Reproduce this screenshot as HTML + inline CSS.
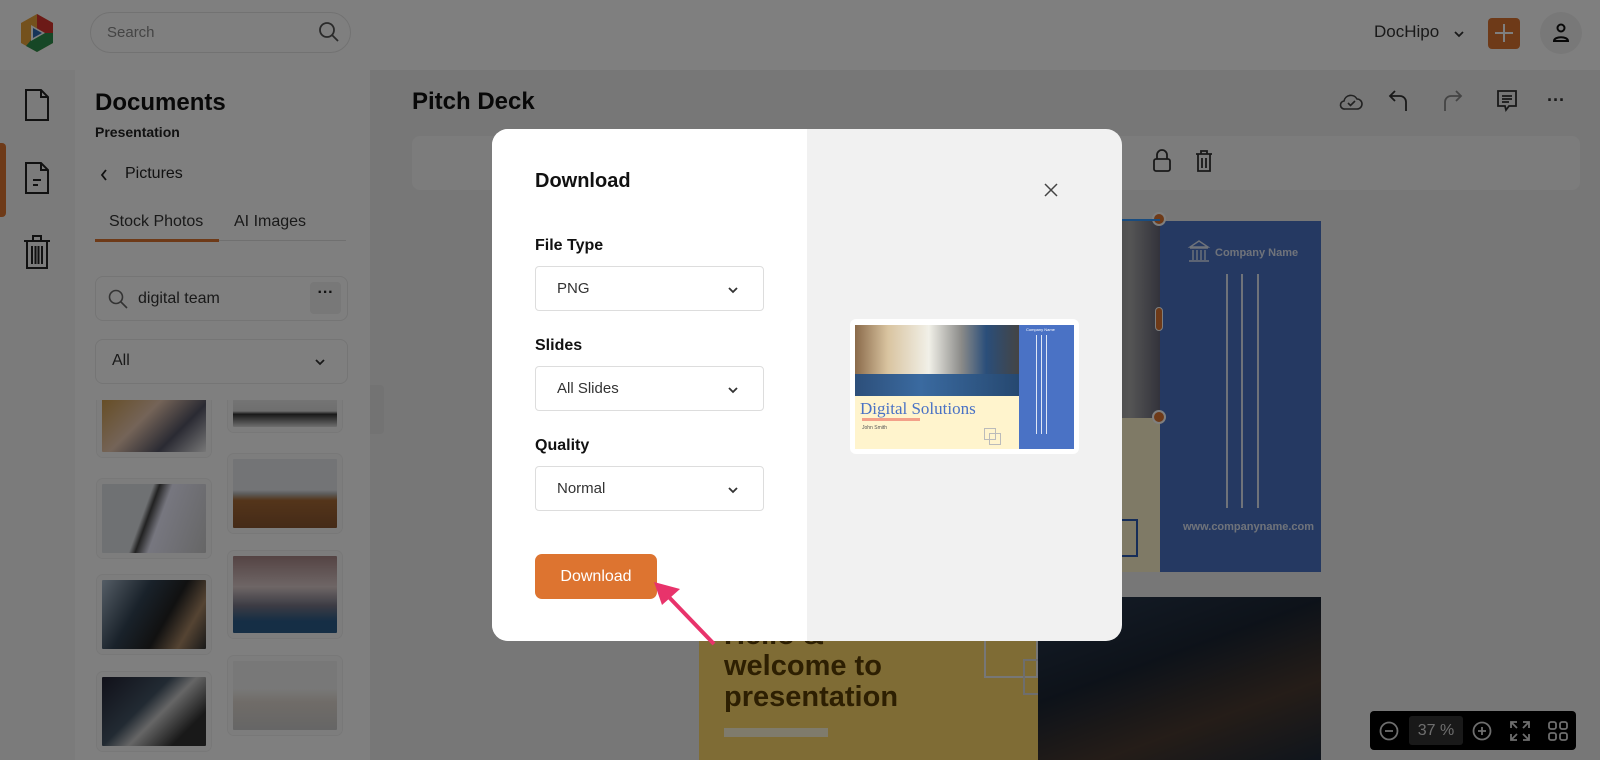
<!DOCTYPE html>
<html><head><meta charset="utf-8"><style>
*{box-sizing:border-box;margin:0;padding:0}
body{width:1600px;height:760px;overflow:hidden;position:relative;font-family:"Liberation Sans",sans-serif;background:#eeeeee;color:#222}
.abs{position:absolute}
.top{left:0;top:0;width:1600px;height:70px;background:#fff}
.rail{left:0;top:70px;width:75px;height:690px;background:#f6f6f6}
.panel{left:75px;top:70px;width:295px;height:690px;background:#fff}
.ws{left:370px;top:70px;width:1230px;height:690px;background:#eee}
.inp{border:1px solid #eaeaea;border-radius:8px;background:#fff}
.th{position:absolute;border-radius:6px;border:5px solid #fafafa;box-shadow:0 0 0 1px #f0f0f0}
.ov{left:0;top:0;width:1600px;height:760px;background:rgba(0,0,0,.5)}
.modal{left:492px;top:129px;width:630px;height:512px;border-radius:16px;overflow:hidden;background:#f1f1f1}
.ml{position:absolute;left:0;top:0;width:315px;height:512px;background:#fff}
.lbl{position:absolute;left:43px;font-weight:bold;font-size:16px;color:#111}
.sel{position:absolute;left:43px;width:229px;height:45px;border:1px solid #ddd;border-radius:4px;font-size:15px;color:#333;padding:13px 0 0 21px}
.sel svg{position:absolute;right:24px;top:18px}
</style></head><body>
<div class="abs top"></div>
<!-- logo -->
<svg class="abs" style="left:18px;top:13px" width="38" height="40" viewBox="0 0 38 40"><path d="M19 1 L35 10 L35 30 L19 39 L3 30 L3 10Z" fill="#e8a33a"/><path d="M19 1 L35 10 L35 20 L19 20Z" fill="#d8352f"/><path d="M35 20 L35 30 L19 39 L8 33 L19 20Z" fill="#2c8f4c"/><path d="M13 12 L27 20 L13 28Z" fill="#fff"/><path d="M15 15 L24 20 L15 25Z" fill="#2d69b3"/></svg>
<div class="abs" style="left:90px;top:12px;width:261px;height:41px;border:1px solid #e4e4e4;border-radius:21px;background:#fff"></div>
<div class="abs" style="left:107px;top:24px;font-size:15px;color:#888">Search</div>
<svg class="abs" style="left:318px;top:21px" width="22" height="22" viewBox="0 0 22 22" fill="none" stroke="#555" stroke-width="1.8"><circle cx="9" cy="9" r="7"/><path d="M14 14l6 6"/></svg>
<div class="abs" style="left:1374px;top:22px;font-size:17px;color:#333">DocHipo</div>
<svg class="abs" style="left:1453px;top:29px" width="12" height="10" viewBox="0 0 12 10" fill="none" stroke="#333" stroke-width="1.8"><path d="M2 3l4 4 4-4"/></svg>
<div class="abs" style="left:1488px;top:18px;width:32px;height:31px;background:#dd7430;border-radius:4px"></div>
<svg class="abs" style="left:1494px;top:23px" width="20" height="20" viewBox="0 0 20 20" stroke="#fff" stroke-width="2"><path d="M10 1v18M1 10h18"/></svg>
<div class="abs" style="left:1540px;top:12px;width:42px;height:42px;border-radius:50%;background:#f0f0f0"></div>
<svg class="abs" style="left:1551px;top:22px" width="20" height="22" viewBox="0 0 20 22" fill="none" stroke="#111" stroke-width="2"><circle cx="10" cy="6" r="3.5"/><path d="M3 19c0-5 14-5 14 0z"/></svg>

<div class="abs rail"></div>
<div class="abs" style="left:0;top:143px;width:6px;height:74px;background:#dd7430;border-radius:0 4px 4px 0"></div>
<svg class="abs" style="left:23px;top:88px" width="28" height="34" viewBox="0 0 28 34" fill="none" stroke="#222" stroke-width="2"><path d="M3 2h15l7 7v23H3z M18 2v7h7"/></svg>
<svg class="abs" style="left:23px;top:161px" width="28" height="34" viewBox="0 0 28 34" fill="none" stroke="#222" stroke-width="2"><path d="M3 2h15l7 7v23H3z M18 2v7h7 M10 19h8 M10 24h5"/></svg>
<svg class="abs" style="left:22px;top:234px" width="30" height="36" viewBox="0 0 30 36" fill="none" stroke="#222" stroke-width="2"><path d="M2 7h26 M11 7V2h8v5 M5 7v27h20V7 M10 12v18 M13.5 12v18 M16.5 12v18 M20 12v18"/></svg>

<div class="abs panel"></div>
<div class="abs" style="left:95px;top:89px;font-size:24px;font-weight:bold;color:#111">Documents</div>
<div class="abs" style="left:95px;top:124px;font-size:14px;font-weight:bold;color:#222">Presentation</div>
<svg class="abs" style="left:100px;top:169px" width="8" height="12" viewBox="0 0 8 12" fill="none" stroke="#222" stroke-width="1.8"><path d="M6 1L2 6l4 5"/></svg>
<div class="abs" style="left:125px;top:165px;font-size:16px;color:#222">Pictures</div>
<div class="abs" style="left:109px;top:213px;font-size:16px;color:#333">Stock Photos</div>
<div class="abs" style="left:234px;top:213px;font-size:16px;color:#333">AI Images</div>
<div class="abs" style="left:95px;top:240px;width:251px;height:1px;background:#e0e0e0"></div>
<div class="abs" style="left:95px;top:239px;width:124px;height:3px;background:#dd7430"></div>
<div class="abs inp" style="left:95px;top:276px;width:253px;height:45px"></div>
<svg class="abs" style="left:108px;top:289px" width="20" height="20" viewBox="0 0 20 20" fill="none" stroke="#666" stroke-width="1.6"><circle cx="8" cy="8" r="6.5"/><path d="M13 13l6 6"/></svg>
<div class="abs" style="left:138px;top:290px;font-size:16px;color:#333">digital team</div>
<div class="abs" style="left:310px;top:282px;width:31px;height:32px;background:#f0f0f0;border-radius:4px;font-size:16px;text-align:center;line-height:22px;font-weight:bold">···</div>
<div class="abs inp" style="left:95px;top:339px;width:253px;height:45px"></div>
<div class="abs" style="left:112px;top:352px;font-size:16px;color:#333">All</div>
<svg class="abs" style="left:314px;top:357px" width="12" height="10" viewBox="0 0 12 10" fill="none" stroke="#333" stroke-width="1.8"><path d="M2 3l4 4 4-4"/></svg>
<div style="position:absolute;left:95px;top:400px;width:260px;height:360px;overflow:hidden">
<div class="th" style="left:2px;top:-10px;width:114px;height:67px;background:linear-gradient(135deg,#c94 0%,#e9c8b0 40%,#556 70%,#eee)"></div>
<div class="th" style="left:133px;top:-10px;width:114px;height:42px;background:linear-gradient(#eee,#ddd 50%,#333 60%,#ddd)"></div>
<div class="th" style="left:2px;top:79px;width:114px;height:79px;background:linear-gradient(110deg,#dfe2e6 40%,#444 45%,#eef 55%,#ccc)"></div>
<div class="th" style="left:133px;top:54px;width:114px;height:79px;background:linear-gradient(#e6e8ec 45%,#bbb 50%,#a86a35 60%,#8a5630)"></div>
<div class="th" style="left:2px;top:175px;width:114px;height:79px;background:linear-gradient(120deg,#abc 0%,#345 35%,#222 60%,#a86 80%,#333)"></div>
<div class="th" style="left:133px;top:151px;width:114px;height:87px;background:linear-gradient(#a88 0%,#dcc 40%,#778 65%,#2a5c8a 85%)"></div>
<div class="th" style="left:2px;top:272px;width:114px;height:79px;background:linear-gradient(135deg,#223 0%,#456 40%,#ccc 55%,#333 80%)"></div>
<div class="th" style="left:133px;top:256px;width:114px;height:79px;background:linear-gradient(#f1f1f0 40%,#e0d8d0 60%,#ccc)"></div>
</div>

<div class="abs ws"></div>
<div class="abs" style="left:370px;top:385px;width:14px;height:49px;background:#e6e6e6;border-radius:0 4px 4px 0"></div>
<div class="abs" style="left:412px;top:88px;font-size:24px;font-weight:bold;color:#111">Pitch Deck</div>
<svg class="abs" style="left:1338px;top:90px" width="26" height="22" viewBox="0 0 26 22" fill="none" stroke="#444" stroke-width="1.6"><path d="M7 19h12a5 5 0 0 0 0-10 7 7 0 0 0-13 2 4 4 0 0 0 1 8z M10 13l2.5 2.5L17 11"/></svg>
<svg class="abs" style="left:1388px;top:89px" width="22" height="24" viewBox="0 0 22 24" fill="none" stroke="#333" stroke-width="1.8"><path d="M7 2L2 7l5 5 M2 7h10a6 6 0 0 1 6 6v9"/></svg>
<svg class="abs" style="left:1441px;top:89px" width="22" height="24" viewBox="0 0 22 24" fill="none" stroke="#888" stroke-width="1.8"><path d="M15 2l5 5-5 5 M20 7H10a6 6 0 0 0-6 6v9"/></svg>
<svg class="abs" style="left:1496px;top:89px" width="22" height="24" viewBox="0 0 22 24" fill="none" stroke="#333" stroke-width="1.8"><path d="M2 2h18v15H13l-3 4-1-4H2z M6 7h10 M6 10h10 M6 13h7"/></svg>
<div class="abs" style="left:1547px;top:90px;font-size:18px;font-weight:bold;color:#333">···</div>
<div class="abs" style="left:412px;top:136px;width:1168px;height:54px;background:#f8f8f8;border-radius:8px"></div>
<svg class="abs" style="left:1152px;top:149px" width="20" height="24" viewBox="0 0 20 24" fill="none" stroke="#333" stroke-width="1.8"><rect x="2" y="10" width="16" height="12" rx="2"/><path d="M5 10V6a5 5 0 0 1 10 0v4"/></svg>
<svg class="abs" style="left:1195px;top:149px" width="18" height="24" viewBox="0 0 18 24" fill="none" stroke="#333" stroke-width="1.8"><path d="M1 5h16 M6 5V2h6v3 M3 5v17h12V5 M7 9v10 M11 9v10"/></svg>
<!-- slide 1 -->
<div class="abs" style="left:1100px;top:221px;width:60px;height:197px;background:linear-gradient(90deg,#888,#aaa,#667)"></div>
<div class="abs" style="left:1100px;top:418px;width:60px;height:154px;background:#fff4cd"></div>
<div class="abs" style="left:1110px;top:519px;width:28px;height:38px;border:2px solid #2d5bb0"></div>
<div class="abs" style="left:1160px;top:221px;width:161px;height:351px;background:#4a72c5"></div>
<div class="abs" style="left:1215px;top:247px;font-size:11px;font-weight:bold;color:#dfe6f5">Company Name</div>
<svg class="abs" style="left:1187px;top:239px" width="24" height="24" viewBox="0 0 24 24" fill="none" stroke="#dfe6f5" stroke-width="1.4"><path d="M2 22h20 M3 9h18 M12 2L3 8h18z M6 11v10 M10 11v10 M14 11v10 M18 11v10"/></svg>
<div class="abs" style="left:1226px;top:274px;width:2px;height:234px;background:#dfe6f5"></div>
<div class="abs" style="left:1241px;top:274px;width:2px;height:234px;background:#dfe6f5"></div>
<div class="abs" style="left:1257px;top:274px;width:2px;height:234px;background:#dfe6f5"></div>
<div class="abs" style="left:1183px;top:521px;font-size:11px;font-weight:bold;color:#dfe6f5">www.companyname.com</div>
<div class="abs" style="left:1152px;top:212px;width:14px;height:14px;border-radius:50%;background:#dd7430;border:2px solid #fff"></div>
<div class="abs" style="left:1152px;top:410px;width:14px;height:14px;border-radius:50%;background:#dd7430;border:2px solid #fff"></div>
<div class="abs" style="left:1155px;top:307px;width:8px;height:24px;border-radius:4px;background:#dd7430;border:1px solid #fff"></div>
<div class="abs" style="left:1100px;top:219px;width:60px;height:2px;background:#39f"></div>
<!-- slide 2 -->
<div class="abs" style="left:699px;top:597px;width:339px;height:163px;background:#ffd86a"></div>
<div class="abs" style="left:724px;top:620px;font-size:29px;font-weight:bold;color:#5a3f05;line-height:31px">Hello &amp;<br>welcome to<br>presentation</div>
<div class="abs" style="left:724px;top:728px;width:104px;height:9px;background:#fff6d8"></div>
<div class="abs" style="left:984px;top:634px;width:54px;height:44px;border:2px solid #eee"></div>
<div class="abs" style="left:1023px;top:659px;width:36px;height:36px;border:2px solid #ddd"></div>
<div class="abs" style="left:1038px;top:597px;width:283px;height:163px;background:linear-gradient(160deg,#2a3a50 0%,#1b2533 40%,#4a3a30 70%,#1f2a38)"></div>
<!-- zoom ctrl -->
<div class="abs" style="left:1370px;top:711px;width:206px;height:39px;background:#000;border-radius:4px"></div>
<div class="abs" style="left:1409px;top:716px;width:54px;height:29px;background:#333;border-radius:3px;color:#ddd;font-size:16px;text-align:center;line-height:29px">37 %</div>
<svg class="abs" style="left:1378px;top:720px" width="22" height="22" viewBox="0 0 22 22" fill="none" stroke="#ddd" stroke-width="1.8"><circle cx="11" cy="11" r="8.5"/><path d="M7 11h8"/></svg>
<svg class="abs" style="left:1471px;top:720px" width="22" height="22" viewBox="0 0 22 22" fill="none" stroke="#ddd" stroke-width="1.8"><circle cx="11" cy="11" r="8.5"/><path d="M7 11h8 M11 7v8"/></svg>
<svg class="abs" style="left:1509px;top:720px" width="22" height="22" viewBox="0 0 22 22" fill="none" stroke="#ddd" stroke-width="1.8"><path d="M2 8V2h6 M2 2l6 6 M20 8V2h-6 M20 2l-6 6 M2 14v6h6 M2 20l6-6 M20 14v6h-6 M20 20l-6-6"/></svg>
<svg class="abs" style="left:1547px;top:720px" width="22" height="22" viewBox="0 0 22 22" fill="none" stroke="#ddd" stroke-width="1.8"><rect x="2" y="2" width="7" height="7" rx="2"/><rect x="13" y="2" width="7" height="7" rx="2"/><rect x="2" y="13" width="7" height="7" rx="2"/><rect x="13" y="13" width="7" height="7" rx="2"/></svg>

<div class="abs ov"></div>

<div class="abs modal">
<div class="ml"></div>
<div class="abs" style="left:43px;top:41px;font-size:20px;font-weight:bold;color:#111">Download</div>
<div class="lbl" style="top:108px">File Type</div>
<div class="sel" style="top:137px">PNG<svg width="12" height="10" viewBox="0 0 12 10" fill="none" stroke="#333" stroke-width="1.8"><path d="M2 3l4 4 4-4"/></svg></div>
<div class="lbl" style="top:208px">Slides</div>
<div class="sel" style="top:237px">All Slides<svg width="12" height="10" viewBox="0 0 12 10" fill="none" stroke="#333" stroke-width="1.8"><path d="M2 3l4 4 4-4"/></svg></div>
<div class="lbl" style="top:308px">Quality</div>
<div class="sel" style="top:337px">Normal<svg width="12" height="10" viewBox="0 0 12 10" fill="none" stroke="#333" stroke-width="1.8"><path d="M2 3l4 4 4-4"/></svg></div>
<div class="abs" style="left:43px;top:425px;width:122px;height:45px;background:#dd7430;border-radius:7px;color:#fff;font-size:16px;text-align:center;line-height:45px">Download</div>
<svg class="abs" style="left:552px;top:54px" width="14" height="14" viewBox="0 0 14 14" stroke="#444" stroke-width="1.5"><path d="M1 1l12 12M13 1L1 13"/></svg>
<div class="abs" style="left:358px;top:190px;width:229px;height:135px;background:#fff;border-radius:6px"></div>
<div class="abs" style="left:363px;top:196px;width:164px;height:71px;background:linear-gradient(90deg,#8a6a4a 0%,#d9c4a0 20%,#f1f0e8 45%,#8a8a88 65%,#2a4e7a 80%,#444)"></div>
<div class="abs" style="left:363px;top:245px;width:164px;height:22px;background:linear-gradient(90deg,#2d4f7a,#3a6aa0 40%,#264870)"></div>
<div class="abs" style="left:363px;top:267px;width:164px;height:53px;background:#fff4cd"></div>
<div class="abs" style="left:368px;top:270px;font-family:'Liberation Serif',serif;font-size:17px;color:#4a72c5">Digital Solutions</div>
<div class="abs" style="left:370px;top:289px;width:58px;height:3px;background:#f3a089"></div>
<div class="abs" style="left:370px;top:296px;font-size:5px;color:#555">John Smith</div>
<div class="abs" style="left:492px;top:299px;width:12px;height:12px;border:1px solid #bbb"></div>
<div class="abs" style="left:497px;top:304px;width:12px;height:12px;border:1px solid #bbb"></div>
<div class="abs" style="left:527px;top:196px;width:55px;height:124px;background:#4a72c5"></div>
<div class="abs" style="left:544px;top:206px;width:1px;height:99px;background:#dfe6f5"></div>
<div class="abs" style="left:549px;top:206px;width:1px;height:99px;background:#dfe6f5"></div>
<div class="abs" style="left:554px;top:206px;width:1px;height:99px;background:#dfe6f5"></div>
<div class="abs" style="left:534px;top:198px;font-size:4px;color:#fff">Company Name</div>
</div>
<svg class="abs" style="left:648px;top:576px" width="72" height="72" viewBox="0 0 72 72"><path d="M66 68L16 16" stroke="#e8336b" stroke-width="4"/><path d="M6 6L32 13 14 29z" fill="#e8336b"/></svg>
</body></html>
